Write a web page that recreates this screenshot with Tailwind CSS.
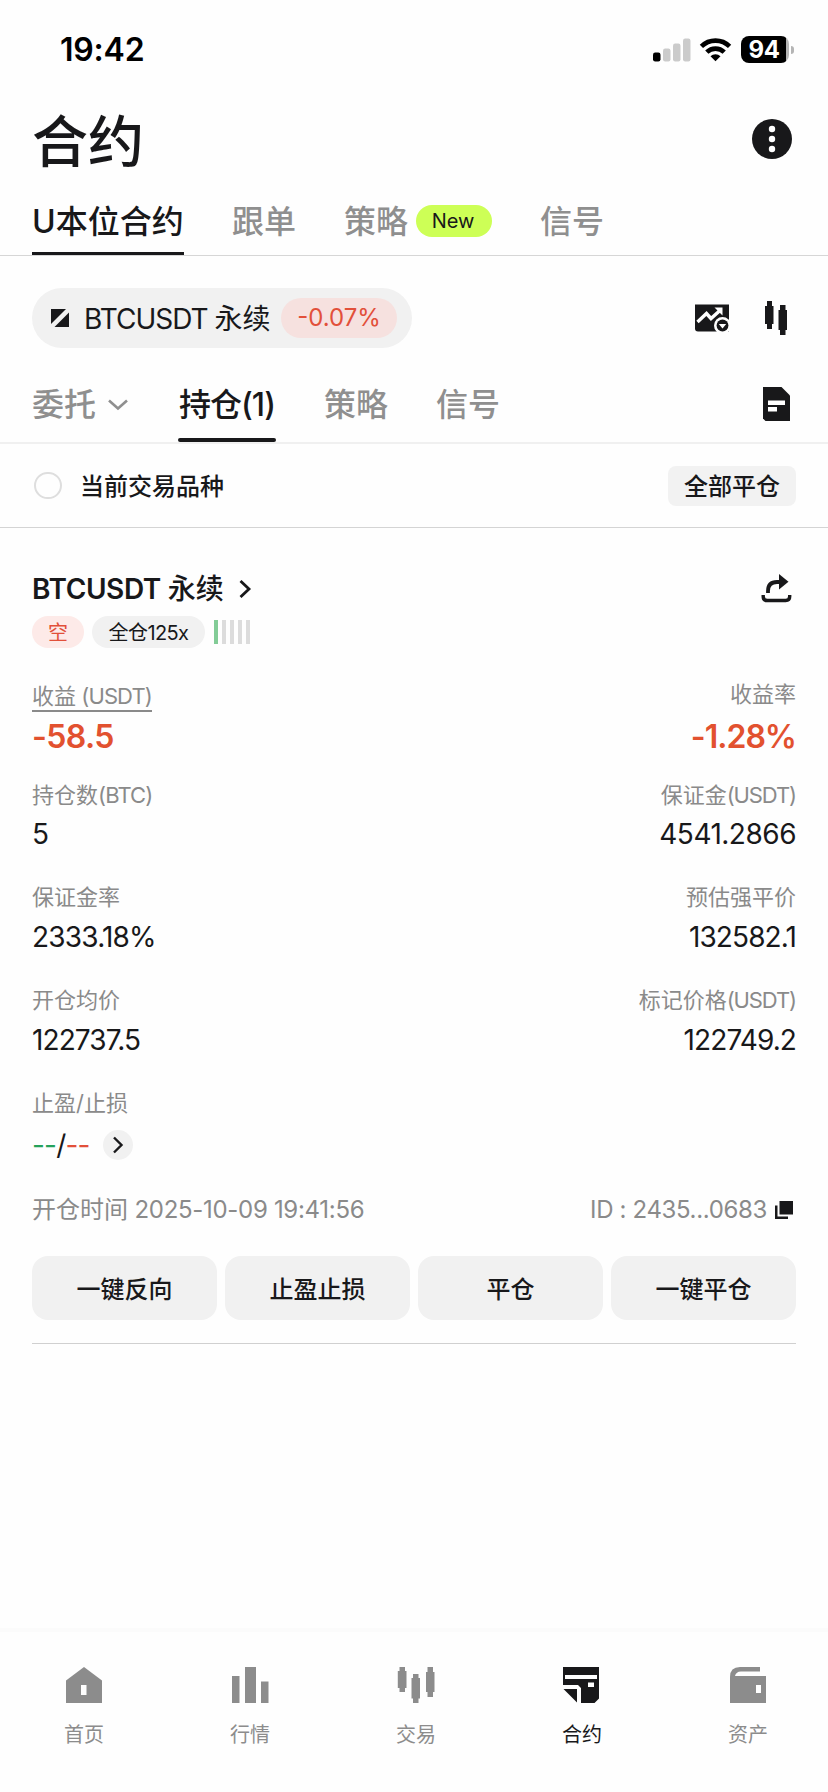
<!DOCTYPE html>
<html lang="zh-CN">
<head>
<meta charset="utf-8">
<title>合约</title>
<script src="https://cdn.jsdelivr.net/npm/@tailwindcss/browser@4"></script>
</head>
<body class="bg-white">
<div class="flex h-[1792px] w-[828px] flex-col overflow-hidden bg-[#fefefe] font-['Inter','Noto_Sans_CJK_SC',sans-serif] whitespace-nowrap text-[#18181a]">

  <!-- status bar -->
  <div class="flex h-[99px] shrink-0 items-center justify-between pr-[34px] pl-[60px] text-black">
    <span class="pt-[1px] text-[32px] leading-10 font-semibold tracking-[-0.2px]">19:42</span>
    <div class="flex items-center">
      <svg class="h-[24px] w-[38px]" viewBox="0 0 38 24"><rect x="0" y="14.5" width="7.500" height="9" rx="2.200"/><g fill="#cbcbcb"><rect x="10" y="10.500" width="7.500" height="13" rx="2.200"/><rect x="20" y="5.500" width="7.500" height="18" rx="2.200"/><rect x="30" y="0.500" width="7.500" height="23" rx="2.200"/></g></svg>
      <svg class="ml-[8px] h-[25px] w-[33px]" viewBox="0 0 33 25" fill="none" stroke="#000" stroke-width="4.600"><path d="M2.400 9.400a20 20 0 0 1 28.200 0"/><path d="M7.800 15.200a12.400 12.400 0 0 1 17.400 0"/><path d="M16.500 24.300l-5-5a7.100 7.100 0 0 1 10 0z" fill="#000" stroke="none"/></svg>
      <div class="ml-[9px] flex h-[27px] w-[48px] items-center justify-center rounded-[8px] bg-linear-to-r from-black from-94% to-[#b5b5b5] to-94% pr-[2px] text-[24px] leading-none font-bold tracking-[-0.3px] text-white">94</div>
      <div class="ml-[2px] h-[8px] w-[3px] rounded-r-full bg-[#b5b5b5]"></div>
    </div>
  </div>

  <!-- title -->
  <div class="flex h-[82px] shrink-0 items-center justify-between pr-9 pl-8">
    <h1 class="pt-[3px] text-[56px] leading-[60px] font-medium">合约</h1>
    <svg class="-mt-[2px] size-10" viewBox="0 0 40 40"><circle cx="20" cy="20" r="20" fill="#18181a"/><g fill="#fff"><circle cx="20" cy="10" r="3.200"/><circle cx="20" cy="20" r="3.200"/><circle cx="20" cy="30" r="3.200"/></g></svg>
  </div>

  <!-- primary tabs -->
  <div class="flex h-[75px] shrink-0 gap-12 border-b border-[#d6d6d6] px-8 text-[32px] font-medium text-[#8f8f8f]">
    <div class="flex w-[152px] items-center rounded-t-[2px] border-b-[3px] border-[#18181a] pt-[10px] text-[#18181a]">U本位合约</div>
    <div class="flex items-center pt-[7px]">跟单</div>
    <div class="flex items-center gap-2 pt-[7px]">策略<span class="-mt-[2px] flex h-8 w-[76px] items-center justify-center rounded-full bg-[#cdff56] pr-[2px] text-[20px] font-normal text-[#18181a]">New</span></div>
    <div class="flex items-center pt-[7px]">信号</div>
  </div>

  <!-- symbol -->
  <div class="mt-8 flex h-[60px] shrink-0 items-center justify-between pr-[40px] pl-8">
    <div class="flex h-[60px] w-[380px] items-center rounded-full bg-[#f1f1f1] pr-[15px] pl-[19px]">
      <svg class="size-[18px]" viewBox="0 0 18 18" fill="#18181a"><path d="M0 0H15L0 15z"/><path d="M18 3.500V18H3.500z"/></svg>
      <span class="ml-[15px] pt-[2px] text-[28px] leading-9"><span class="tracking-[-1px]">BTCUSDT </span>永续</span>
      <span class="ml-auto flex h-10 w-[116px] items-center justify-center rounded-full bg-[#f6e1df] text-[24px] text-[#e2503a]">-0.07%</span>
    </div>
    <div class="flex items-center gap-[34px]">
      <svg class="h-[30px] w-[36px]" viewBox="0 0 36 30"><path d="M1 1.500H35V28.500H4a3 3 0 0 1-3-3z" fill="#18181a"/><path d="M3.500 19L12.500 10.500l4.500 5 9.500-8.500" fill="none" stroke="#fff" stroke-width="3.400"/><path d="M20.500 4.500H28.500V12.500z" fill="#fff"/><circle cx="28.500" cy="22.500" r="8.500" fill="#fefefe"/><circle cx="28.500" cy="22.500" r="5.900" fill="#18181a"/><path d="M24.800 21h7.400l-3.700 4.500z" fill="#fff"/></svg>
      <svg class="h-[34px] w-[24px]" viewBox="0 0 24 34" fill="#18181a"><path d="M3 0h5v5h1.500v18H8v5H3v-5H1V5h2zM16 4h5.500v5H23v20h-1.500v5H16v-5h-1.500V9H16z"/></svg>
    </div>
  </div>

  <!-- secondary tabs -->
  <div class="mt-[23px] flex h-[73px] shrink-0 border-b-2 border-[#f0f0f0] pr-[38px] pl-8 text-[32px] font-medium text-[#8f8f8f]">
    <div class="flex items-center pb-[3px]">委托<svg class="ml-[12px] h-[14px] w-[20px]" viewBox="0 0 20 14" fill="none" stroke="#8f8f8f" stroke-width="2.600"><path d="M1 2.500l9 8 9-8"/></svg></div>
    <div class="relative ml-[50px] flex w-[98px] items-center pb-[3px] pl-[1px] tracking-[-1px] text-[#18181a]">持仓(1)<i class="absolute inset-x-0 bottom-0 h-1 rounded-full bg-[#18181a]"></i></div>
    <div class="ml-12 flex items-center pb-[3px]">策略</div>
    <div class="ml-12 flex items-center pb-[3px]">信号</div>
    <svg class="mt-4 ml-auto h-[34px] w-[27px]" viewBox="0 0 27 34"><path d="M0 0H18.500L27 8.500V34H2.500L0 31.500z" fill="#18181a"/><path d="M5 13.500h17v4.500H5zM5 20h9v4.500H5z" fill="#fff"/></svg>
  </div>

  <!-- filter -->
  <div class="flex h-[84px] shrink-0 items-center justify-between border-b border-[#d4d4d4] px-8 text-[24px] font-medium">
    <div class="flex items-center gap-[18px]"><i class="ml-[2px] h-[27px] w-[28px] rounded-full border-2 border-[#dedede]"></i><span class="pt-[2px]">当前交易品种</span></div>
    <span class="mt-[1px] flex h-10 w-32 items-center justify-center rounded-lg bg-[#f2f2f2] pt-[1px]">全部平仓</span>
  </div>

  <!-- position -->
  <div class="flex flex-col px-8 pt-10">
    <div class="flex h-[41px] items-center justify-between">
      <div class="flex items-center text-[28px] font-semibold"><span class="tracking-[-0.4px]">BTCUSDT&nbsp;</span><span class="font-medium">永续</span><svg class="ml-[15px] h-[18px] w-[13px]" viewBox="0 0 13 18" fill="none" stroke="#18181a" stroke-width="2.800"><path d="M1.500 1l8.500 8-8.500 8"/></svg></div>
      <svg class="mr-[4px] h-[30px] w-[31px]" viewBox="0 0 31 30"><path d="M18 0l9.500 7.700L18 15.500z" fill="#18181a"/><path d="M7 19v-2q0-9 9-9h4" fill="none" stroke="#18181a" stroke-width="3.800"/><path d="M2.200 21v1.500q0 4 4 4h18.500q4 0 4-4V21" fill="none" stroke="#18181a" stroke-width="3.400"/></svg>
    </div>
    <div class="mt-[7px] flex h-8 items-center text-[20px]">
      <span class="flex h-8 w-[52px] items-center justify-center rounded-full bg-[#fdeae8] pt-[2px] text-[#e2503a]">空</span>
      <span class="ml-2 flex h-8 w-[113px] items-center justify-center rounded-full bg-[#f1f1f1] pt-[2px] tracking-[-0.600px]">全仓125x</span>
      <div class="ml-[9px] flex gap-1"><i class="h-6 w-1 bg-[#83cc97]"></i><i class="h-6 w-1 bg-[#dcdcdc]"></i><i class="h-6 w-1 bg-[#dcdcdc]"></i><i class="h-6 w-1 bg-[#dcdcdc]"></i><i class="h-6 w-1 bg-[#dcdcdc]"></i></div>
    </div>

    <div class="mt-8 flex h-8 items-start justify-between text-[22px] leading-[30px] text-[#8a8a8a]"><span class="border-b-2 border-[#8a8a8a] pt-[3px] leading-[27px]">收益<span class="tracking-[-0.9px]"> (USDT)</span></span><span class="-mt-[1px]">收益率</span></div>
    <div class="mt-[7px] flex justify-between text-[32px] leading-9 font-semibold text-[#e2512f]"><span class="tracking-[-0.6px]">-58.5</span><span class="tracking-[-1px]">-1.28%</span></div>

    <div class="mt-[25px] flex justify-between text-[22px] leading-[30px] text-[#8a8a8a]"><span>持仓数<span class="tracking-[-0.9px]">(BTC)</span></span><span>保证金<span class="tracking-[-1.1px]">(USDT)</span></span></div>
    <div class="mt-[6px] flex justify-between text-[28px] leading-9"><span>5</span><span class="tracking-[-0.500px]">4541.2866</span></div>

    <div class="mt-[30px] flex justify-between text-[22px] leading-[30px] text-[#8a8a8a]"><span>保证金率</span><span>预估强平价</span></div>
    <div class="mt-[7px] flex justify-between text-[28px] leading-9"><span class="tracking-[-0.800px]">2333.18%</span><span class="tracking-[-0.900px]">132582.1</span></div>

    <div class="mt-[30px] flex justify-between text-[22px] leading-[30px] text-[#8a8a8a]"><span>开仓均价</span><span>标记价格<span class="tracking-[-1.1px]">(USDT)</span></span></div>
    <div class="mt-[7px] flex justify-between text-[28px] leading-9"><span class="tracking-[-0.900px]">122737.5</span><span class="tracking-[-0.900px]">122749.2</span></div>

    <div class="mt-[30px] text-[22px] leading-[30px] text-[#8a8a8a]">止盈/止损</div>
    <div class="mt-[9px] flex h-9 items-center text-[28px] leading-9 tracking-[-0.8px]">
      <span class="text-[#25a25a]">--</span><span>/</span><span class="text-[#e2503a]">--</span>
      <span class="ml-[13px] flex size-[30px] items-center justify-center rounded-full bg-[#f1f1f1]"><svg class="h-[18px] w-[12px]" viewBox="0 0 12 18" fill="none" stroke="#18181a" stroke-width="2.400"><path d="M2 1.500l7.500 7.500L2 16.500"/></svg></span>
    </div>

    <div class="mt-[32px] flex items-center justify-between text-[24px] leading-[30px] text-[#8a8a8a]">
      <span>开仓时间<span class="tracking-[-0.3px]"> 2025-10-09 19:41:56</span></span>
      <span class="flex items-center tracking-[-0.35px]">ID : 2435...0683<svg class="-mt-[1px] mr-[3px] ml-[8px] size-[18px]" viewBox="0 0 18 18" fill="#18181a"><path d="M4.500 0H18V13.500H4.500z"/><path d="M0 4.500h2.500v11H13V18H0z"/></svg></span>
    </div>

    <div class="mt-[31px] grid grid-cols-4 gap-2 text-[24px] font-medium">
      <button class="h-16 rounded-2xl bg-[#f1f1f1] pt-[3px]">一键反向</button>
      <button class="h-16 rounded-2xl bg-[#f1f1f1] pt-[3px]">止盈止损</button>
      <button class="h-16 rounded-2xl bg-[#f1f1f1] pt-[3px]">平仓</button>
      <button class="h-16 rounded-2xl bg-[#f1f1f1] pt-[3px]">一键平仓</button>
    </div>
    <div class="mt-[23px] h-px bg-[#d0d0d0]"></div>
  </div>

  <!-- bottom navigation -->
  <div class="mt-auto h-1 shrink-0 bg-[#fbfbfb]"></div>
  <nav class="grid h-[160px] w-[831px] shrink-0 grid-cols-5 pt-[35px] pl-[1px] text-[20px] leading-[30px] text-[#8c8c8c]">
    <div class="flex flex-col items-center gap-[17px]"><svg class="size-9" viewBox="0 0 36 36" fill="#8c8c8c"><path fill-rule="evenodd" d="M18 0L36 13.500V36H0V13.500zM15 18v10h5.500V18z"/></svg>首页</div>
    <div class="flex flex-col items-center gap-[17px]"><svg class="h-9 w-[37px]" viewBox="0 0 37 36" fill="#8c8c8c"><path d="M0 9h7.500v27H0zM13 0h11v36H13zM29 14.500h7.500V36H29z"/></svg>行情</div>
    <div class="flex flex-col items-center gap-[17px]"><svg class="h-9 w-[38px]" viewBox="0 0 38 36" fill="#8c8c8c"><path d="M2.500 0H8v4h1.500v17H8v4H2.500v-4H.8V4h1.700zM16 7h5.500v4H23v20.500h-1.500V36H16v-4.500h-1.500V11H16zM30.500 0H36v5h1.500v20H36v5h-5.500v-5H29V5h1.500z"/></svg>交易</div>
    <div class="flex flex-col items-center gap-[17px] text-[#18181a]"><svg class="mr-[3px] size-9" viewBox="0 0 36 36"><path d="M0 0H36V31.500L31.500 36H18V21L15 18H0z" fill="#18181a"/><path d="M2 8h32v4H2zM25 15.500h6v4.500h-6z" fill="#fff"/><path d="M.5 22H14V35.500z" fill="#18181a"/></svg>合约</div>
    <div class="flex flex-col items-center gap-[17px]"><svg class="size-9" viewBox="0 0 36 36" fill="#8c8c8c"><path d="M0 36V10Q0 0 10 0H30V4.500H11Q6 4.500 5 9H36V36z"/><path d="M26 18h5v8h-5z" fill="#fff"/></svg>资产</div>
  </nav>
</div>
</body>
</html>
